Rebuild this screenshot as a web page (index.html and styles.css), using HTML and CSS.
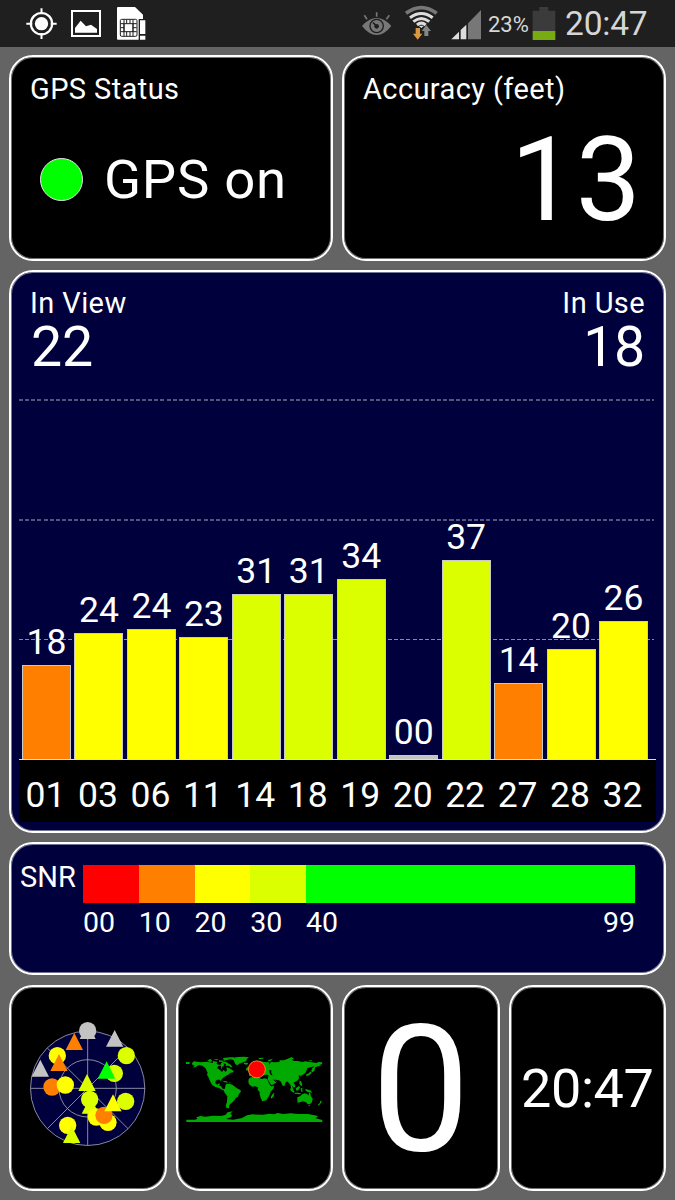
FILE: index.html
```html
<!DOCTYPE html>
<html lang="en">
<head>
<meta charset="utf-8">
<title>GPS Status</title>
<link rel="stylesheet" href="styles.css">
</head>
<body>
<header class="statusbar">
  <svg class="sb-left" width="225" height="47" viewBox="0 0 675 141">
    <g fill="none" stroke="#fff">
      <circle cx="124.500" cy="71" r="32" stroke-width="6.500"/>
      <path d="M124.500 25v18M124.500 99v18M79 71h18M152 71h18" stroke-width="6"/>
      <rect x="216" y="33" width="84" height="75" stroke-width="6"/>
    </g>
    <circle cx="124.500" cy="71" r="20" fill="#fff"/>
    <path d="M225 98V84L242 62L258 79L273 74L291 87V98Z" fill="#fff"/>
    <path d="M354 21H405L429 44V57H416V119H354Q351 119 351 116V24Q351 21 354 21Z" fill="#fff"/>
    <g fill="none" stroke="#1f1f1f" stroke-width="3">
      <rect x="361" y="58" width="50" height="51" rx="4"/>
      <rect x="372" y="71" width="27" height="24"/>
      <path d="M372 59V108M399 59V108M380 59V71M390 59V71M380 95V108M390 95V108M362 71H372M362 83H372M362 95H372M399 71H410M399 83H410M399 95H410"/>
    </g>
    <path d="M420 61H436V102H420ZM420 107H436V119H420Z" fill="#fff"/>
  </svg>
  <svg class="sb-right" width="132" height="47" viewBox="0 0 396 141">
    <path d="M36 78Q57 54 80 54Q103 54 124 78Q103 105 80 105Q57 105 36 78Z" fill="#777"/>
    <circle cx="80" cy="78" r="20" fill="none" stroke="#1f1f1f" stroke-width="4"/>
    <path d="M80 78L69 68" stroke="#1f1f1f" stroke-width="5"/><circle cx="80" cy="79" r="7" fill="#1f1f1f"/>
    <path d="M80 37V50M43 46L51 58M118 46L109 58" stroke="#777" stroke-width="5"/>
    <g fill="none">
      <path d="M168 40Q214 6 260 40" stroke="#777" stroke-width="11"/>
      <path d="M180 53Q214 28 248 53M190 65Q214 46 238 65M201 75Q214 64 227 75" stroke="#ddd" stroke-width="9"/>
    </g>
    <path d="M206 77H222L214 84Z" fill="#ddd"/>
    <path d="M197 84H210V101H217L203 119L189 101H197Z" fill="#dd973c"/>
    <path d="M223 108V93H215L229 75L243 93H235V108Z" fill="#858585"/>
    <path d="M304 118L327 95V118ZM332 118V90L349 74V118Z" fill="#ddd"/>
    <path d="M354 118V70L393 30V118Z" fill="#777"/>
  </svg>
  <span class="percent">23%</span>
  <svg class="battery" width="24" height="47" viewBox="0 0 72 141">
    <path d="M2 32H22V21H49V32H70V93H2Z" fill="#3b3b3b"/><path d="M2 93H70V120H2Z" fill="#78ab12"/>
  </svg>
  <span class="clock">20:47</span>
</header>
<main class="dash">
  <div class="row top">
    <section class="card">
      <h2 class="label">GPS Status</h2>
      <div class="state"><i class="lamp"></i><span>GPS on</span></div>
    </section>
    <section class="card">
      <h2 class="label">Accuracy (feet)</h2>
      <div class="accuracy">13</div>
    </section>
  </div>
  <section class="card navy sats">
    <div class="summary">
      <div><div class="label">In View</div><div class="count">22</div></div>
      <div class="right"><div class="label">In Use</div><div class="count">18</div></div>
    </div>
    <div class="plot">
      <div class="col"><b>18</b><i class="bar orange" style="height:94px"></i></div>
      <div class="col"><b>24</b><i class="bar yellow" style="height:126px"></i></div>
      <div class="col"><b>24</b><i class="bar yellow" style="height:130px"></i></div>
      <div class="col"><b>23</b><i class="bar yellow" style="height:122px"></i></div>
      <div class="col"><b>31</b><i class="bar lime" style="height:165px"></i></div>
      <div class="col"><b>31</b><i class="bar lime" style="height:165px"></i></div>
      <div class="col"><b>34</b><i class="bar lime" style="height:180px"></i></div>
      <div class="col"><b>00</b><i class="bar grey" style="height:4px"></i></div>
      <div class="col"><b>37</b><i class="bar lime" style="height:199px"></i></div>
      <div class="col"><b>14</b><i class="bar orange" style="height:76px"></i></div>
      <div class="col"><b>20</b><i class="bar yellow" style="height:110px"></i></div>
      <div class="col"><b>26</b><i class="bar yellow" style="height:138px"></i></div>
    </div>
    <div class="axis">
      <span>01</span><span>03</span><span>06</span><span>11</span><span>14</span><span>18</span><span>19</span><span>20</span><span>22</span><span>27</span><span>28</span><span>32</span>
    </div>
  </section>
  <section class="card navy snr">
    <span class="snr-name">SNR</span>
    <div class="scale">
      <div class="strip"><i class="red"></i><i class="orange"></i><i class="yellow"></i><i class="lime"></i><i class="green"></i></div>
      <div class="ticks"><span>00</span><span>10</span><span>20</span><span>30</span><span>40</span><span class="last">99</span></div>
    </div>
  </section>
  <div class="row bottom">
    <section class="card tile">
      <svg class="sky" width="140" height="145" viewBox="0 0 420 435">
        <circle cx="203" cy="235" r="171.500" fill="#00003c"/>
        <g fill="none" stroke="#a2a2b6" stroke-width="2.500">
          <circle cx="203" cy="235" r="171.500"/><circle cx="203" cy="235" r="86"/>
          <path d="M203 63V406M32 235H375M82 114L324 356M324 114L82 356"/>
        </g>
        <g fill="#c3c3c3"><path d="M258 110L284 60L310 110ZM35 200L61 149L87 200ZM179 87L203 36L227 87Z"/><circle cx="203" cy="62" r="26"/></g>
        <circle cx="112" cy="137" r="26" fill="#ff0"/>
        <path d="M137 120L163 69L189 120ZM91 183L117 132L143 183Z" fill="#ff8000"/>
        <g fill="#dcff00"><circle cx="319" cy="137" r="26"/><circle cx="283" cy="190" r="26"/></g>
        <path d="M233 206L260 154L286 206Z" fill="#0f0"/>
        <circle cx="96" cy="231" r="26" fill="#ff8000"/><circle cx="136" cy="225" r="26" fill="#ff0"/>
        <path d="M175 243L201 192L227 243ZM185 311L211 260L237 311Z" fill="#dcff00"/><circle cx="209" cy="268" r="26" fill="#dcff00"/>
        <circle cx="229" cy="321" r="26" fill="#ff0"/><circle cx="264" cy="337" r="26" fill="#ff0"/><circle cx="252" cy="316" r="26" fill="#ff8000"/>
        <circle cx="317" cy="274" r="26" fill="#dcff00"/><path d="M253 304L279 253L305 304Z" fill="#ff0"/>
        <circle cx="143" cy="346" r="26" fill="#ff0"/><path d="M129 399L155 348L181 399Z" fill="#dcff00"/>
      </svg>
    </section>
    <section class="card tile">
      <svg class="world" width="150" height="90" viewBox="10 0 450 270">
        <g fill="#00aa00">
          <path d="M31 66H42V72H31ZM49 69L55 64L75 67L95 65L112 69L121 67L124 73L134 75L137 68L143 68L146 76L139 82L138 88L147 92L150 96L154 90L152 82L160 84L171 91L175 96L163 99L160 103L150 108L145 111L139 117L135 123L132 119L125 119L120 123L119 130L125 134L130 130L133 132L130 137L137 139L139 145L145 148L152 146L151 150L141 151L130 144L119 141L109 134L103 123L98 111L94 104L96 98L89 84L80 77L70 75L61 80L51 83L57 77L50 74Z"/>
          <path d="M95 61L105 57L110 62L103 66ZM111 63L125 65L123 69L112 69ZM113 57L130 58L123 61ZM139 65L150 65L165 74L171 82L164 81L159 77L150 78L151 72L140 69ZM142 54L164 52L177 51L166 56L154 60L145 62ZM130 61L145 62L138 66L130 65Z"/>
          <path d="M161 57L170 54L185 51L205 50L220 52L214 56L212 63L202 67L191 71L185 76L179 73L176 65L173 60ZM205 68L215 68L218 72L211 74L204 71ZM139 122L153 124L157 128L148 127ZM159 127L166 128L163 130Z"/>
          <path d="M151 132L161 131L170 134L178 140L184 145L194 150L196 155L190 161L187 170L180 174L176 181L169 188L163 193L160 199L160 205L153 205L150 197L154 185L155 169L147 158L144 152L147 147Z"/>
          <path d="M228 86L223 84L224 77L230 75L236 69L243 65L255 64L266 66L281 67L280 74L286 66L298 67L311 66L312 61L325 61L334 57L347 57L354 63L366 63L380 66L389 64L404 66L423 69L427 66L439 67L440 72L431 75L437 78L428 79L418 82L417 91L412 96L406 94L410 85L416 79L404 82L395 84L393 91L389 98L382 104L378 105L376 111L374 106L369 107L370 115L366 121L358 126L353 128L359 136L358 142L353 142L348 136L352 145L354 154L347 146L344 134L339 128L334 124L329 129L326 139L320 136L316 125L310 121L303 120L299 118L303 125L299 130L288 136L285 133L279 123L276 117L278 110L269 109L263 106L260 109L255 101L250 102L245 98L239 99L235 103L226 109L220 107L220 99L230 98L233 92Z"/>
          <path d="M223 113L231 111L243 109L248 110L250 114L259 117L267 115L275 117L280 130L286 139L296 138L293 146L285 155L282 164L278 172L272 181L260 184L256 176L252 164L252 156L246 149L247 142L238 139L229 140L220 133L218 125L219 118ZM290 163L296 158L294 169L288 176L285 172Z"/>
          <path d="M212 84L217 80L223 89L218 92L211 91ZM248 54L266 53L260 57L250 57ZM277 60L292 56L284 64L278 64ZM335 57L348 51L356 58ZM397 61L410 61L406 64ZM391 104L399 100L405 94L408 99L401 105L393 109ZM410 86L413 86L412 96L409 96ZM372 121L377 125L380 134L377 139L371 131ZM360 145L370 138L373 142L367 152L361 151ZM344 144L352 149L357 155L353 158L344 151ZM356 158L370 158L377 161L372 163L357 161ZM375 145L383 144L378 148L382 154L376 155ZM389 147L404 151L410 158L396 157L389 151Z"/>
          <path d="M365 172L373 169L379 163L387 160L395 162L398 167L400 158L404 160L406 169L411 176L409 187L402 193L396 192L391 187L382 184L372 187L366 188L365 180ZM397 196L404 195L402 199ZM434 182L439 184L436 189L431 195L427 198L428 193L433 188Z"/>
          <path d="M32 239L59 239L65 236L62 232L74 228L89 230L112 227L136 228L149 225L156 217L171 214L164 221L169 226L166 232L151 237L173 239L199 234L214 226L231 223L262 224L281 221L295 223L306 219L323 222L345 220L367 222L398 222L427 228L420 235L440 240V246H32Z"/>
        </g>
        <path d="M265 106L274 104L280 107L276 111L267 109ZM281 90L287 91L287 100L291 106L286 105L281 97ZM292 118L303 123L300 126L296 122L290 116ZM129 77L136 77L137 86L143 91L139 96L132 89L124 84Z" fill="#000"/>
        <circle cx="243.500" cy="88" r="25.500" fill="#f00" stroke="#f29b26" stroke-width="2.500"/>
      </svg>
    </section>
    <section class="card tile"><span class="speed">0</span></section>
    <section class="card tile"><span class="time">20:47</span></section>
  </div>
</main>
</body>
</html>
```
FILE: styles.css
```css
* { box-sizing: border-box; }
body {
  margin: 0;
  width: 675px;
  height: 1200px;
  overflow: hidden;
  background: #646464;
  color: #fff;
  font-family: Roboto, sans-serif;
  line-height: 1;
}
.statusbar {
  display: flex;
  align-items: center;
  height: 47px;
  background: #1f1f1f;
  color: #d6d6d6;
}
.sb-right { margin-left: 125px; }
.percent { width: 44px; padding-left: 6px; font-size: 22px; margin-top: 3px; white-space: nowrap; }
.battery { margin-left: 6px; }
.clock { margin-left: 9px; font-size: 33.500px; letter-spacing: -0.2px; }
.dash { padding: 8px 9px 9px; display: flex; flex-direction: column; gap: 9px; }
.row { display: grid; gap: 9px; height: 206px; }
.top { grid-template-columns: 1fr 1fr; }
.bottom { grid-template-columns: repeat(4, 1fr); margin-top: 1px; }
.card {
  min-width: 0;
  background: #000;
  border: 2px solid #fff;
  border-radius: 24px;
  box-shadow: inset 0 0 0 1px rgba(255, 255, 255, 0.45);
}
.navy { background: #00003c; }
.top .card { padding: 18px 19px 0; }
.label { margin: 0; font-size: 29px; font-weight: 400; letter-spacing: 0.4px; white-space: nowrap; }
.state { display: flex; align-items: center; gap: 21px; margin: 48px 0 0 10px; font-size: 54.500px; letter-spacing: 0.7px; }
.lamp { width: 43px; height: 43px; border: 1px solid #e8e8e8; border-radius: 50%; background: #0f0; }
.accuracy { margin-top: 18px; padding-right: 4px; text-align: right; font-size: 116px; }
.sats { height: 563px; padding: 17px 8px 0; }
.summary { display: flex; justify-content: space-between; height: 91px; padding: 0 11px; }
.count { margin-top: 2px; padding-left: 1px; font-size: 55.500px; letter-spacing: -0.3px; }
.right { text-align: right; }
.plot {
  display: grid;
  grid-template-columns: repeat(12, 49px);
  column-gap: 3.460px;
  align-items: end;
  height: 380px;
  padding-left: 3px;
  border-bottom: 1px solid #ddd;
  background:
    repeating-linear-gradient(90deg, #55557c 0 4px, transparent 4px 6.150px) 0 19px / 635px 2px no-repeat,
    repeating-linear-gradient(90deg, #55557c 0 4px, transparent 4px 6.150px) 0 139px / 635px 2px no-repeat,
    repeating-linear-gradient(90deg, #8a8aa4 0 4px, transparent 4px 6.150px) 0 259px / 635px 1px no-repeat;
}
.col { display: flex; flex-direction: column; align-items: center; }
.col b { margin-bottom: 5px; font-size: 35.500px; font-weight: 400; }
.bar { width: 100%; border: 1px solid #c9c9c9; border-bottom: 0; }
.axis {
  display: grid;
  grid-template-columns: repeat(12, 49px);
  column-gap: 3.460px;
  height: 62px;
  padding: 18px 0 0 2px;
  background: #000;
  font-size: 35.500px;
  text-align: center;
}
.red { background: #f00; }
.orange { background: #ff8000; }
.yellow { background: #ff0; }
.lime { background: #dcff00; }
.green { background: #0f0; }
.grey { background: #c3c3c3; }
.snr { display: flex; height: 133px; padding: 19px 29px 0 9px; font-size: 28.500px; }
.snr-name { width: 63px; font-size: 29px; }
.scale { flex: 1; padding-top: 2px; }
.strip, .ticks { display: grid; grid-template-columns: repeat(4, 10fr) 59fr; }
.strip { height: 38px; }
.ticks { grid-template-columns: repeat(4, 10fr) 10fr 49fr; margin-top: 6px; }
.last { text-align: right; }
.tile { display: flex; align-items: center; justify-content: center; }
.tile svg { flex: none; }
.sky { margin: 0 0 12px 4px; }
.world { margin: 0 1px 6px 0; }
.speed { padding-top: 4px; font-size: 176px; }
.time { padding-top: 2px; font-size: 54px; letter-spacing: -0.4px; }
```
